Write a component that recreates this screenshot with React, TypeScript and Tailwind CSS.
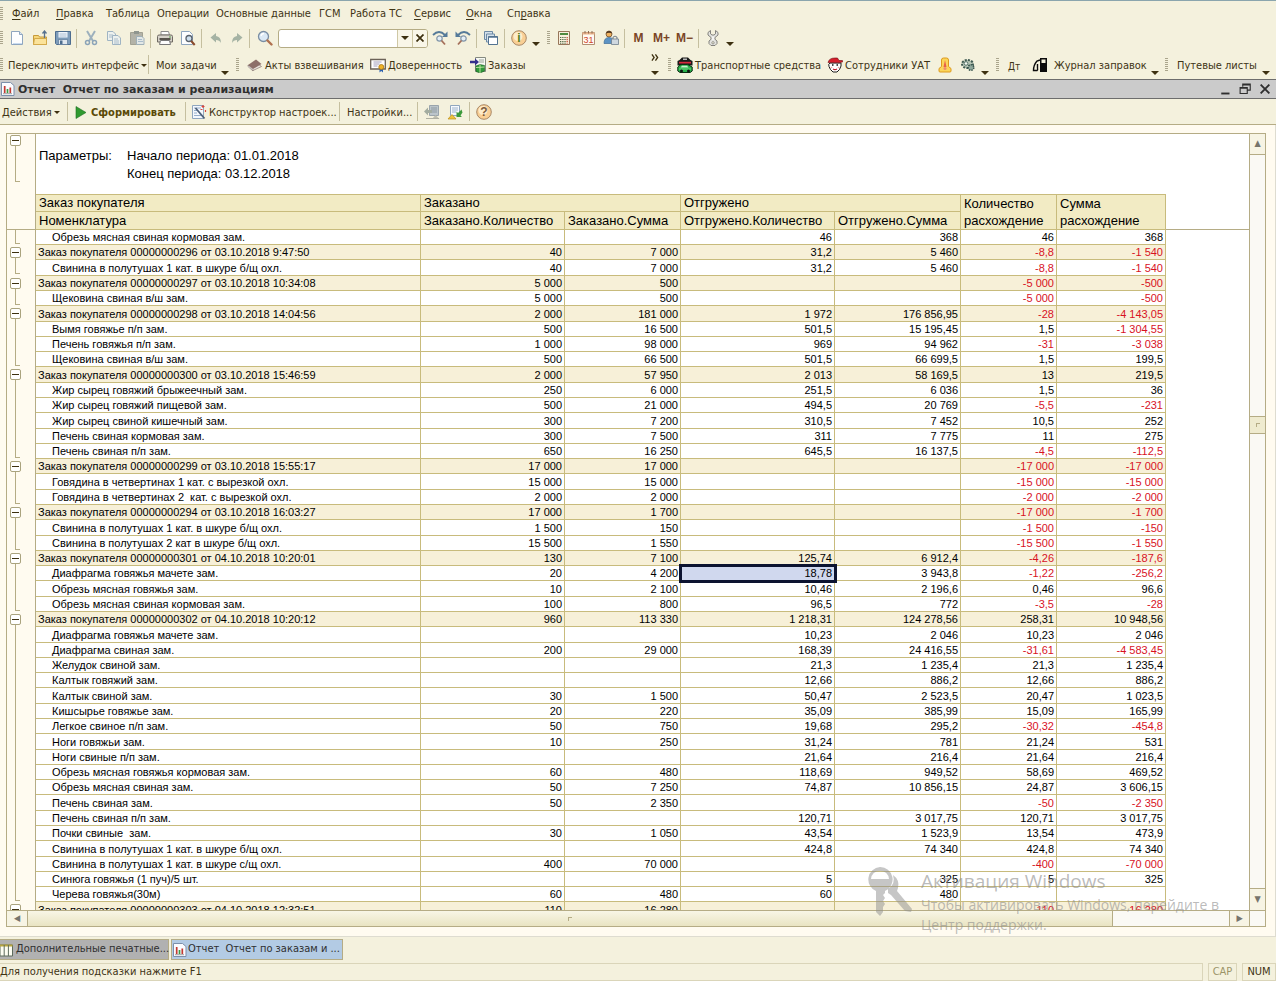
import type { ReactNode } from "react";
import clsx from "clsx";

type IconProps = { className?: string; children: ReactNode };

const Svg = ({ className = "h-4 w-4", children }: IconProps) => (
  <svg viewBox="0 0 16 16" className={clsx("shrink-0", className)} fill="none" aria-hidden="true">
    {children}
  </svg>
);

const NewIcon = () => (
  <Svg>
    <path d="M2.500 1.500h8l3 3v10h-11z" fill="#fdfeff" stroke="#8fa6bf" />
    <path d="M10.500 1.500v3h3" fill="#dbe6f2" stroke="#8fa6bf" />
    <path d="M4 13.500h9" stroke="#c9dcf0" />
  </Svg>
);

const OpenIcon = () => (
  <Svg>
    <path d="M1.500 5.500h5l1 1.500h7v7.500h-13z" fill="#f6d77a" stroke="#c79b3a" />
    <path d="M1.500 14.500l1-6h12v6z" fill="#fbe39a" stroke="#d4aa4a" />
    <path d="M12.500 8V2M10.500 3.500l2-2.500 2 2.500" stroke="#56718f" strokeWidth="1.300" />
  </Svg>
);

const SaveIcon = () => (
  <Svg>
    <path d="M.5 1.500h15v13H1.500l-1-1z" fill="#7d9cba" stroke="#4d6d8f" />
    <path d="M3.500 2h9v5.500h-9z" fill="#eef4fa" />
    <path d="M4.500 4h7M4.500 6h7" stroke="#9db4cc" strokeWidth=".8" />
    <path d="M3.500 9.500h9v5h-9z" fill="#dfe7ef" stroke="#4d6d8f" strokeWidth=".6" />
    <path d="M5 10.500h2.500v3.500H5z" fill="#4d6d8f" />
  </Svg>
);

const CutIcon = () => (
  <Svg>
    <path d="M4 1l6 10M12 1L6 11" stroke="#9db0bd" strokeWidth="2" />
    <circle cx="4.500" cy="12.500" r="2" stroke="#8ba4b8" strokeWidth="1.500" />
    <circle cx="11.500" cy="12.500" r="2" stroke="#8ba4b8" strokeWidth="1.500" />
  </Svg>
);

const CopyIcon = () => (
  <Svg>
    <path d="M1.500 1.500h5.500l2.500 2.500v6.500h-8z" fill="#edf1ee" stroke="#9fb4c3" />
    <path d="M3 5h4M3 7h4" stroke="#a9bccb" />
    <path d="M6.500 5.500H12l2.500 2.500v6.500h-8z" fill="#edf1ee" stroke="#9fb4c3" />
    <path d="M8 9h4M8 11h5M8 13h5" stroke="#a9bccb" />
  </Svg>
);

const PasteIcon = () => (
  <Svg>
    <path d="M1.500 2.500h12v12h-12z" fill="#b3b3a8" stroke="#a2a293" />
    <path d="M5 1h5v3H5z" fill="#8f968f" />
    <path d="M7.500 6.500H13l2 2v6H7.500z" fill="#e3e8e6" stroke="#9fb0b8" />
    <path d="M9 9.500h4M9 11.500h5" stroke="#a9bccb" />
  </Svg>
);

const PrintIcon = () => (
  <Svg>
    <path d="M4 5V1.500h7.500L12.500 5z" fill="#fff" stroke="#8c8c8c" />
    <path d="M.5 6.500q0-1.500 1.500-1.500h12q1.500 0 1.500 1.500V12H.5z" fill="#d6d2ca" stroke="#6f6a62" />
    <path d="M2.500 9h11" stroke="#4a463f" strokeWidth="1.800" />
    <path d="M3.500 10.500h9l1 4h-11z" fill="#fdfdfd" stroke="#777" />
    <path d="M12 7h2" stroke="#57a243" />
  </Svg>
);

const PreviewIcon = () => (
  <Svg>
    <path d="M1.500 1.500h8l3 3v10h-11z" fill="#fdfeff" stroke="#8fa6bf" />
    <circle cx="9" cy="8.500" r="3" fill="#cfe0ee" stroke="#59626c" strokeWidth="1.300" />
    <path d="M11.200 11l3.500 4" stroke="#8a4b2c" strokeWidth="2" />
  </Svg>
);

const UndoIcon = ({ flip = false }: { flip?: boolean }) => (
  <Svg className={clsx("h-4 w-4", flip && "-scale-x-100")}>
    <path d="M2.500 7.500L8 3v3q5 .5 5 7-1.500-3-5-3v2.500z" fill="#a5b3a4" />
  </Svg>
);

const LensIcon = () => (
  <Svg>
    <circle cx="6.500" cy="6.500" r="5" fill="#dbe9f5" stroke="#7a8ea3" strokeWidth="1.300" />
    <path d="M4 6q.5-2.500 3-2.500" stroke="#fff" strokeWidth="1.300" />
    <path d="M10.500 10.500l4 4" stroke="#b0714f" strokeWidth="2.400" strokeLinecap="round" />
  </Svg>
);

const FindIcon = ({ flip = false }: { flip?: boolean }) => (
  <Svg className={clsx("h-4 w-4", flip && "-scale-x-100")}>
    <path d="M1 5q6-6 12 0" stroke="#557a99" strokeWidth="1.800" />
    <path d="M15.500 1.500V7H10z" fill="#557a99" />
    <circle cx="7.500" cy="8.500" r="2.700" fill="#e4eef6" stroke="#8195a8" strokeWidth="1.200" />
    <path d="M9.500 10.500l3.500 4" stroke="#a5705a" strokeWidth="1.800" />
  </Svg>
);

const WindowsIcon = () => (
  <Svg>
    <path d="M1.500 1.500h8v8h-8z" fill="#d6e2ec" stroke="#6d8aa5" />
    <path d="M3.500 4h8v8h-8z" fill="#d6e2ec" stroke="#6d8aa5" />
    <path d="M5.500 6.500h9v8h-9z" fill="#fff" stroke="#537391" />
    <path d="M5.500 7h9" stroke="#537391" strokeWidth="1.500" />
  </Svg>
);

const RoundIcon = ({ glyph, color }: { glyph: string; color: string }) => (
  <Svg>
    <circle cx="8" cy="8" r="7.300" fill="#f9cf94" stroke="#a98866" />
    <circle cx="7" cy="6.500" r="4.500" fill="#fdeccb" />
    <text x="8" y="12.300" textAnchor="middle" fontSize="12" fontWeight="bold" fontFamily="Liberation Sans" fill={color}>
      {glyph}
    </text>
  </Svg>
);

const CalcIcon = () => (
  <Svg>
    <path d="M2.500 1.500h11v13h-11z" fill="#f8efdc" stroke="#97765a" />
    <path d="M4 3h8v2H4z" fill="#4f8a3f" />
    <path d="M4 7.500h6M4 9.500h6M4 11.500h6M4 13.200h6" stroke="#4f6b45" strokeDasharray="1.300 .9" />
    <path d="M11.200 7v6.500" stroke="#c9503c" strokeWidth="1.300" strokeDasharray="1.300 .7" />
  </Svg>
);

const CalendarIcon = () => (
  <Svg>
    <path d="M2.500 2.500h12v12h-12z" fill="#fffaf2" stroke="#b28e71" />
    <path d="M2.500 2.500h12v2h-12z" fill="#eab58d" />
    <path d="M5 1v2.500M8.500 1v2.500M12 1v2.500" stroke="#8f6a50" />
    <text x="8.500" y="13.200" textAnchor="middle" fontSize="9" fontFamily="Liberation Sans" fill="#d0442a">
      31
    </text>
  </Svg>
);

const UserLockIcon = () => (
  <Svg>
    <circle cx="6" cy="4" r="3" fill="#f0b260" stroke="#6c4b2b" strokeWidth=".8" />
    <path d="M3 3.500Q4 .5 6.500 1q2.500.5 2.500 2.500-3-1.500-6 0z" fill="#4c3420" />
    <path d="M1 13.500q0-6 5-6t5 6z" fill="#5c93c4" stroke="#3f6d98" strokeWidth=".7" />
    <path d="M10 9V7.500q2-2.500 4 0V9" stroke="#7d8893" strokeWidth="1.200" />
    <path d="M8.500 9h7v5.500h-7z" fill="#cfd8df" stroke="#71808e" strokeWidth=".8" />
  </Svg>
);

const WrenchIcon = () => (
  <Svg>
    <path
      d="M5.500.5L3 2.500V5l3 2.500v1.800L4 11v2.500L6 15.500h4l2-2V11L10 9.300V7.500L13 5V2.500L10.500.5v3.300L9 5H7L5.500 3.800z"
      fill="#e3e3df"
      stroke="#777773"
      strokeWidth=".9"
    />
    <circle cx="8" cy="12.800" r="1.200" fill="#f4f1dd" stroke="#777773" strokeWidth=".7" />
    <path d="M8 6.500v3.500" stroke="#fff" strokeWidth="1.200" />
  </Svg>
);

const BookIcon = () => (
  <Svg>
    <path d="M1 9l5 4.500 8.500-4L9 5.500z" fill="#e9e2dd" stroke="#8b7a74" strokeWidth=".7" />
    <path d="M1 8l8-5.500 5.500 4.500L6 12z" fill="#8d6f6a" />
    <path d="M1 9.500V8l5 4.500v1.500z" fill="#fff" stroke="#6a5550" strokeWidth=".5" />
  </Svg>
);

const CertIcon = () => (
  <Svg>
    <path d="M.7 2.500h14.600v9.500H.7z" fill="#fff" stroke="#6b6257" strokeWidth="1.300" />
    <path d="M3.500 5h8M3.500 7h6M3.500 9h4" stroke="#9793b5" strokeWidth=".9" />
    <path d="M9.500 11v4.500l1.700-1.500 1.800 1.500V11z" fill="#2d62b0" />
    <circle cx="11.300" cy="10" r="2.500" fill="#f0b429" stroke="#a8740e" strokeWidth=".8" />
  </Svg>
);

const OrdersIcon = () => (
  <Svg>
    <path d="M5.500.5h10v14h-10z" fill="#f7f9f3" stroke="#858a80" />
    <path d="M9 3h5M9 5h5" stroke="#9aa39a" />
    <path d="M0 3.700h5V1.500L9 5 5 8.500V6.300H0z" fill="#34308c" />
    <path d="M6 9l4-1.500 4.500 1V14L10 16l-4-1.500z" fill="#2f9a3a" stroke="#16591e" strokeWidth=".6" />
    <path d="M6 10.500l8.500-.5M10 7.500V16" stroke="#c5e8a6" strokeWidth=".9" />
  </Svg>
);

const CarsIcon = () => (
  <Svg>
    <path d="M5 .5h6L13.500 3 15.500 4v4.500H.5V4L2.500 3z" fill="#191919" />
    <path d="M2 4.800h12v1.700H2z" fill="#d8263c" />
    <path d="M6 1.500h4V3H6z" fill="#b9b9b9" />
    <path d="M.8 10q2-2.500 4.200-2.500h5.500l4.700 2.500v4l-2 1.500H3L.8 14z" fill="#28b04a" stroke="#0b2f12" />
    <path d="M5 8.700h5l1.500 1.800H3.500z" fill="#c6f0cd" />
    <path d="M2 12h12" stroke="#7be08f" strokeWidth=".8" />
    <circle cx="4.500" cy="14" r="1.500" fill="#111" />
    <circle cx="11.500" cy="14" r="1.500" fill="#111" />
  </Svg>
);

const DriverIcon = () => (
  <Svg>
    <path d="M3 6q-2 1-1 3.500l1.500 3L6 15h4l2.500-2.500L14 9V6z" fill="#fff" stroke="#1c1c1c" />
    <path d="M1 5.500Q2 1 8 1h2.500L12 3.500h3.500V5l-3.500.8z" fill="#d51f2c" stroke="#6d0b13" strokeWidth=".6" />
    <path d="M5 8h1.500M9.500 8H11" stroke="#111" strokeWidth="1.300" />
    <path d="M6 12q2 1.300 4 0" stroke="#c11f2c" strokeWidth="1.200" />
    <circle cx="4.500" cy="10.500" r=".8" fill="#f2a0a0" />
    <circle cx="11.500" cy="10.500" r=".8" fill="#f2a0a0" />
  </Svg>
);

const BellIcon = () => (
  <Svg>
    <path d="M4.500 3q0-2 2-2h3q2 0 2 2v6.500l2.500 2V14q0 1-1 1H3q-1 0-1-1v-2.500l2.500-2z" fill="#fbd55a" stroke="#dd9a1c" />
    <path d="M8 3l1.500 7h-3z" fill="#e8604a" />
    <circle cx="8" cy="11.500" r="1.500" fill="#f08b70" />
  </Svg>
);

const GearIcon = () => (
  <Svg>
    <ellipse cx="7.500" cy="7" rx="5.500" ry="4" fill="#b5c4b4" stroke="#3f5a52" strokeWidth="2" strokeDasharray="2 1.200" />
    <circle cx="6" cy="6.500" r="1.800" fill="#f4f8f2" stroke="#5a766c" />
    <circle cx="11" cy="10.500" r="2.800" fill="#8fa79b" stroke="#34504a" strokeWidth="1.500" strokeDasharray="1.500 1" />
  </Svg>
);

const PumpIcon = () => (
  <Svg>
    <path d="M8 1h7v14H8z" fill="#0b0b0b" />
    <path d="M9.500 2.500h4V6h-4z" fill="#f4f1dd" />
    <path d="M8 3L5 4Q1.500 8 1.500 13.500H5q1-.5.500-2.500V7" stroke="#0b0b0b" strokeWidth="1.400" />
  </Svg>
);

const ReportIcon = () => (
  <Svg>
    <path d="M1.500 1.500h9l3.500 3v10H1.500z" fill="#fbfcff" stroke="#7c90ab" />
    <path d="M4.700 5v7" stroke="#c23a32" strokeWidth="1.700" />
    <path d="M7.500 8v4" stroke="#3c9a45" strokeWidth="1.700" />
    <path d="M10.300 6.500V12" stroke="#c23a32" strokeWidth="1.700" />
    <path d="M3 12.700h9" stroke="#777" strokeWidth=".7" />
  </Svg>
);

const TableIcon = () => (
  <Svg>
    <path d="M0 3h12.500v11H0z" fill="#fdfdf2" stroke="#5d6b5d" />
    <path d="M0 3.500h12.500" stroke="#b7a53f" strokeWidth="2" />
    <path d="M4.200 3v11M8.400 3v11" stroke="#5d6b5d" />
  </Svg>
);

const WandIcon = () => (
  <Svg>
    <path d="M1.500 1.500h11v13h-11z" fill="#f4f8fd" stroke="#8fa6bf" />
    <path d="M3 4h7M3 6.500h3M3 9h3M3 11.500h8" stroke="#96aecb" />
    <path d="M4.500 4l9 10.500" stroke="#4b5e78" strokeWidth="1.800" />
    <path d="M12 1v3M10.500 2.500h3M9.500 5.500h2M14.500 6v2" stroke="#d9463b" strokeWidth="1.200" />
  </Svg>
);

const RestoreSettingsIcon = () => (
  <Svg>
    <path d="M5.500 1.500h9v10h-9z" fill="#bcc5ca" stroke="#9aa5ac" />
    <path d="M7 4h6M7 6h6M7 8h6" stroke="#8f9ba3" />
    <path d="M8 6H4V3.500L0 7.500l4 4V9h4z" fill="#a3aca0" />
    <path d="M8 15l3.500-4 4 4z" fill="#bdbdae" />
    <path d="M2 14.500h13" stroke="#b0b0a2" />
  </Svg>
);

const SaveSettingsIcon = () => (
  <Svg>
    <path d="M3.500 1.500h9v10h-9z" fill="#f7fafe" stroke="#8fa6bf" />
    <path d="M5 4h6M5 6h6M5 8h4" stroke="#9bb2cc" />
    <path d="M14.500 5.500L11 9 9.500 7.500V13H15l-1.500-1.500 2-3z" fill="#3c9a3c" />
    <path d="M1 15l4-4.500L9 15z" fill="#edc23c" stroke="#bd8f1b" strokeWidth=".7" />
  </Svg>
);

const Caret = () => <span className="h-0 w-0 border-x-4 border-t-4 border-x-transparent border-t-[#3d3010]" />;

const SmallCaret = () => (
  <span className="mt-0.5 h-0 w-0 shrink-0 border-x-3 border-t-3 border-x-transparent border-t-[#3d3010]" />
);

const More = ({ className }: { className: string }) => (
  <button aria-label="Ещё" className={clsx("flex h-full items-end justify-center pb-1", className)}>
    <Caret />
  </button>
);

const Handle = ({ className = "w-[5px]" }: { className?: string }) => (
  <span className={clsx("flex shrink-0 justify-end pr-0.5", className)}>
    <span className="h-3.5 w-[3px] bg-[repeating-linear-gradient(#aaa58c_0_1px,transparent_1px_2px)]" />
  </span>
);

const Sep = ({ className = "w-[5px]" }: { className?: string }) => (
  <span className={clsx("flex shrink-0 justify-center", className)}>
    <span className="h-[19px] w-px bg-[#c5bf9f]" />
  </span>
);

type ToolProps = { label: string; className?: string; children: ReactNode };

const Tool = ({ label, className = "w-[23px]", children }: ToolProps) => (
  <button aria-label={label} title={label} className={clsx("flex shrink-0 items-center justify-center", className)}>
    {children}
  </button>
);

type TextToolProps = { className: string; icon?: ReactNode; caret?: boolean; children: string };

const TextTool = ({ className, icon, caret, children }: TextToolProps) => (
  <button className={clsx("flex shrink-0 items-center gap-0.5 whitespace-nowrap", className)}>
    {icon}
    <span className="pt-[3px]">{children}</span>
    {caret && <SmallCaret />}
  </button>
);

const menu = [
  { pre: "", key: "Ф", post: "айл", width: "w-11" },
  { pre: "", key: "П", post: "равка", width: "w-[50px]" },
  { pre: "Таблица", key: "", post: "", width: "w-[51px]" },
  { pre: "Операции", key: "", post: "", width: "w-[59px]" },
  { pre: "Основные данные", key: "", post: "", width: "w-[103px]" },
  { pre: "ГСМ", key: "", post: "", width: "w-[31px]" },
  { pre: "Работа ТС", key: "", post: "", width: "w-16" },
  { pre: "", key: "С", post: "ервис", width: "w-[52px]" },
  { pre: "", key: "О", post: "кна", width: "w-[41px]" },
  { pre: "Сп", key: "р", post: "авка", width: "w-[51px]" },
];

type Row = { name: string; group?: boolean; v: string[] };

const rows: Row[] = [
  { name: "Обрезь мясная свиная кормовая зам.", v: ["", "", "46", "368", "46", "368"] },
  { name: "Заказ покупателя 00000000296 от 03.10.2018 9:47:50", group: true, v: ["40", "7 000", "31,2", "5 460", "-8,8", "-1 540"] },
  { name: "Свинина в полутушах 1 кат. в шкуре б/щ охл.", v: ["40", "7 000", "31,2", "5 460", "-8,8", "-1 540"] },
  { name: "Заказ покупателя 00000000297 от 03.10.2018 10:34:08", group: true, v: ["5 000", "500", "", "", "-5 000", "-500"] },
  { name: "Щековина свиная в/ш зам.", v: ["5 000", "500", "", "", "-5 000", "-500"] },
  { name: "Заказ покупателя 00000000298 от 03.10.2018 14:04:56", group: true, v: ["2 000", "181 000", "1 972", "176 856,95", "-28", "-4 143,05"] },
  { name: "Вымя говяжье п/п зам.", v: ["500", "16 500", "501,5", "15 195,45", "1,5", "-1 304,55"] },
  { name: "Печень говяжья п/п зам.", v: ["1 000", "98 000", "969", "94 962", "-31", "-3 038"] },
  { name: "Щековина свиная в/ш зам.", v: ["500", "66 500", "501,5", "66 699,5", "1,5", "199,5"] },
  { name: "Заказ покупателя 00000000300 от 03.10.2018 15:46:59", group: true, v: ["2 000", "57 950", "2 013", "58 169,5", "13", "219,5"] },
  { name: "Жир сырец говяжий брыжеечный зам.", v: ["250", "6 000", "251,5", "6 036", "1,5", "36"] },
  { name: "Жир сырец говяжий пищевой зам.", v: ["500", "21 000", "494,5", "20 769", "-5,5", "-231"] },
  { name: "Жир сырец свиной кишечный зам.", v: ["300", "7 200", "310,5", "7 452", "10,5", "252"] },
  { name: "Печень свиная кормовая зам.", v: ["300", "7 500", "311", "7 775", "11", "275"] },
  { name: "Печень свиная п/п зам.", v: ["650", "16 250", "645,5", "16 137,5", "-4,5", "-112,5"] },
  { name: "Заказ покупателя 00000000299 от 03.10.2018 15:55:17", group: true, v: ["17 000", "17 000", "", "", "-17 000", "-17 000"] },
  { name: "Говядина в четвертинах 1 кат. с вырезкой охл.", v: ["15 000", "15 000", "", "", "-15 000", "-15 000"] },
  { name: "Говядина в четвертинах 2  кат. с вырезкой охл.", v: ["2 000", "2 000", "", "", "-2 000", "-2 000"] },
  { name: "Заказ покупателя 00000000294 от 03.10.2018 16:03:27", group: true, v: ["17 000", "1 700", "", "", "-17 000", "-1 700"] },
  { name: "Свинина в полутушах 1 кат. в шкуре б/щ охл.", v: ["1 500", "150", "", "", "-1 500", "-150"] },
  { name: "Свинина в полутушах 2 кат в шкуре б/щ охл.", v: ["15 500", "1 550", "", "", "-15 500", "-1 550"] },
  { name: "Заказ покупателя 00000000301 от 04.10.2018 10:20:01", group: true, v: ["130", "7 100", "125,74", "6 912,4", "-4,26", "-187,6"] },
  { name: "Диафрагма говяжья мачете зам.", v: ["20", "4 200", "18,78", "3 943,8", "-1,22", "-256,2"] },
  { name: "Обрезь мясная говяжья зам.", v: ["10", "2 100", "10,46", "2 196,6", "0,46", "96,6"] },
  { name: "Обрезь мясная свиная кормовая зам.", v: ["100", "800", "96,5", "772", "-3,5", "-28"] },
  { name: "Заказ покупателя 00000000302 от 04.10.2018 10:20:12", group: true, v: ["960", "113 330", "1 218,31", "124 278,56", "258,31", "10 948,56"] },
  { name: "Диафрагма говяжья мачете зам.", v: ["", "", "10,23", "2 046", "10,23", "2 046"] },
  { name: "Диафрагма свиная зам.", v: ["200", "29 000", "168,39", "24 416,55", "-31,61", "-4 583,45"] },
  { name: "Желудок свиной зам.", v: ["", "", "21,3", "1 235,4", "21,3", "1 235,4"] },
  { name: "Калтык говяжий зам.", v: ["", "", "12,66", "886,2", "12,66", "886,2"] },
  { name: "Калтык свиной зам.", v: ["30", "1 500", "50,47", "2 523,5", "20,47", "1 023,5"] },
  { name: "Кишсырье говяжье зам.", v: ["20", "220", "35,09", "385,99", "15,09", "165,99"] },
  { name: "Легкое свиное п/п зам.", v: ["50", "750", "19,68", "295,2", "-30,32", "-454,8"] },
  { name: "Ноги говяжьи зам.", v: ["10", "250", "31,24", "781", "21,24", "531"] },
  { name: "Ноги свиные п/п зам.", v: ["", "", "21,64", "216,4", "21,64", "216,4"] },
  { name: "Обрезь мясная говяжья кормовая зам.", v: ["60", "480", "118,69", "949,52", "58,69", "469,52"] },
  { name: "Обрезь мясная свиная зам.", v: ["50", "7 250", "74,87", "10 856,15", "24,87", "3 606,15"] },
  { name: "Печень свиная зам.", v: ["50", "2 350", "", "", "-50", "-2 350"] },
  { name: "Печень свиная п/п зам.", v: ["", "", "120,71", "3 017,75", "120,71", "3 017,75"] },
  { name: "Почки свиные  зам.", v: ["30", "1 050", "43,54", "1 523,9", "13,54", "473,9"] },
  { name: "Свинина в полутушах 1 кат. в шкуре б/щ охл.", v: ["", "", "424,8", "74 340", "424,8", "74 340"] },
  { name: "Свинина в полутушах 1 кат. в шкуре с/щ охл.", v: ["400", "70 000", "", "", "-400", "-70 000"] },
  { name: "Синюга говяжья (1 пуч)/5 шт.", v: ["", "", "5", "325", "5", "325"] },
  { name: "Черева говяжья(30м)", v: ["60", "480", "60", "480", "", ""] },
  { name: "Заказ покупателя 00000000303 от 04.10.2018 12:32:51", group: true, v: ["110", "16 280", "", "", "-110", "-16 280"] },
];

const selected = { row: 22, col: 2 };

const GroupToggle = () => (
  <button
    aria-label="Свернуть группу"
    className="flex h-[11px] w-[11px] shrink-0 items-center justify-center rounded-[2px] border border-[#aaa37e] bg-white"
  >
    <span className="h-px w-[7px] bg-[#3d3010]" />
  </button>
);

const OutlineCell = ({ group, last, height }: { group?: boolean; last: boolean; height: string }) => (
  <td className="border-r border-[#b5ac85] bg-[#fffbf0] p-0 align-top">
    {group ? (
      <div className={clsx("flex flex-col items-center pt-0.5 pr-3", height)}>
        <GroupToggle />
        <span className="w-px flex-1 bg-[#b5ac85]" />
      </div>
    ) : (
      <div className={clsx("ml-2 w-[5px] border-l border-[#b5ac85]", last ? "h-[14px] border-b" : height)} />
    )}
  </td>
);

const ReportTable = () => {
  const head = "border-r border-b border-[#c8bb7c] bg-[#f2ebc4] px-[3px] py-0 text-left align-top font-normal";
  return (
    <table className="w-full table-fixed border-separate border-spacing-0">
      <colgroup>
        <col className="w-[29px]" />
        <col className="w-[385px]" />
        <col className="w-[144px]" />
        <col className="w-[116px]" />
        <col className="w-[154px]" />
        <col className="w-[126px]" />
        <col className="w-24" />
        <col className="w-[109px]" />
        <col />
      </colgroup>
      <thead className="text-[13px] leading-[17px]">
        <tr className="h-[18px]">
          <td rowSpan={2} className="border-r border-b border-[#b5ac85] bg-[#fffbf0] p-0" />
          <th className={clsx(head, "border-t leading-4")}>Заказ покупателя</th>
          <th colSpan={2} className={clsx(head, "border-t leading-4")}>Заказано</th>
          <th colSpan={2} className={clsx(head, "border-t leading-4")}>Отгружено</th>
          <th rowSpan={2} className={clsx(head, "border-t")}>Количество расхождение</th>
          <th rowSpan={2} className={clsx(head, "border-t")}>Сумма расхождение</th>
          <td rowSpan={2} className="border-b border-[#b5ac85] p-0" />
        </tr>
        <tr className="h-[18px]">
          <th className={head}>Номенклатура</th>
          <th className={head}>Заказано.Количество</th>
          <th className={head}>Заказано.Сумма</th>
          <th className={head}>Отгружено.Количество</th>
          <th className={head}>Отгружено.Сумма</th>
        </tr>
      </thead>
      <tbody className="text-[11px] leading-[14px] whitespace-pre">
        {rows.map((row, i) => {
          const height = i % 7 === 2 || i % 7 === 5 ? "h-4" : "h-[15px]";
          return (
            <tr key={i} className={height}>
              <OutlineCell group={row.group} last={!!rows[i + 1]?.group} height={height} />
              <td
                className={clsx(
                  "overflow-hidden border-r border-b border-[#c8bb7c] py-0",
                  row.group ? "bg-[#f7f0d8] pl-0.5" : "pl-4",
                )}
              >
                {row.name}
              </td>
              {row.v.map((value, c) => (
                <td
                  key={c}
                  className={clsx(
                    "border-r border-b border-[#c8bb7c] py-0 pr-0.5 text-right",
                    value.startsWith("-") && "text-[#d8121f]",
                    selected.row === i && selected.col === c
                      ? "relative bg-[#d0d8ee] outline-3 -outline-offset-1 outline-[#0c1330]"
                      : row.group && "bg-[#f7f0d8]",
                  )}
                >
                  {value}
                </td>
              ))}
              <td className="p-0" />
            </tr>
          );
        })}
      </tbody>
    </table>
  );
};

const ScrollButton = ({ label, glyph, className }: { label: string; glyph: string; className: string }) => (
  <button
    aria-label={label}
    className={clsx("flex shrink-0 items-center justify-center border-[#b5ac85] bg-[#f7f4e4] text-[9px] text-[#77756c]", className)}
  >
    {glyph}
  </button>
);

const Watermark = () => (
  <div className="pointer-events-none absolute right-[49px] bottom-[49px] flex gap-2 font-['Open_Sans','Noto_Sans',sans-serif] text-[#8d8d8d]/60">
    <svg viewBox="0 0 46 50" className="h-[50px] w-[46px]" fill="#8d8d8d" fillOpacity=".5" aria-hidden="true">
      <path
        fillRule="evenodd"
        d="M13 0a12.500 12.500 0 0 1 5 24v2l-2 2 2 3-2 3 2 3-2 3v5l-3 4-4-4V24A12.500 12.500 0 0 1 13 0zM4 12h18q-1-8-9-8t-9 8z"
      />
      <path d="M26 8q7 5 5 13l-1 3 15 18-1 3-6-1-14-16-3-2v-4q8-5 5-14z" />
    </svg>
    <div>
      <p className="text-[19px] leading-7">Активация Windows</p>
      <p className="w-[310px] text-[14px] leading-5">Чтобы активировать Windows, перейдите в Центр поддержки.</p>
    </div>
  </div>
);

const App = () => {
  return (
    <div className="relative flex h-screen flex-col overflow-hidden bg-white pr-1 pb-[3px] font-['DejaVu_Sans_Condensed','Noto_Sans',sans-serif] text-[11px] text-[#3f3415]">
      <header className="border-t border-[#8aa5ad] bg-[#f4f1dd]">
        <nav className="flex h-[25px] items-center">
          <Handle />
          <div className="flex pt-0.5 pl-[7px]">
            {menu.map((item) => (
              <button key={item.pre + item.key + item.post} className={clsx("shrink-0 text-left whitespace-nowrap", item.width)}>
                {item.pre}
                {item.key && <span className="underline underline-offset-2">{item.key}</span>}
                {item.post}
              </button>
            ))}
          </div>
        </nav>

        <div className="flex h-6 items-center">
          <Handle />
          <Tool label="Новый"><NewIcon /></Tool>
          <Tool label="Открыть"><OpenIcon /></Tool>
          <Tool label="Сохранить"><SaveIcon /></Tool>
          <Sep />
          <Tool label="Вырезать"><CutIcon /></Tool>
          <Tool label="Копировать"><CopyIcon /></Tool>
          <Tool label="Вставить"><PasteIcon /></Tool>
          <Sep />
          <Tool label="Печать"><PrintIcon /></Tool>
          <Tool label="Просмотр"><PreviewIcon /></Tool>
          <Sep />
          <Tool label="Отменить"><UndoIcon /></Tool>
          <Tool label="Вернуть" className="w-5"><UndoIcon flip /></Tool>
          <Sep />
          <Tool label="Найти" className="w-[26px]"><LensIcon /></Tool>
          <div className="flex h-[19px] w-[150px] shrink-0 overflow-hidden rounded-[3px] border border-[#b5ac85] bg-white">
            <input aria-label="Поиск" className="min-w-0 flex-1 px-1 outline-none" />
            <button aria-label="История поиска" className="flex w-[15px] items-center justify-center border-l border-[#cfc8a5] bg-[#f9f6e8]">
              <Caret />
            </button>
            <button aria-label="Очистить" className="flex w-[15px] items-center justify-center border-l border-[#cfc8a5] bg-[#f9f6e8]">
              <Svg className="h-2 w-2">
                <path d="M1 1l14 14M15 1L1 15" stroke="#3d3010" strokeWidth="3.500" />
              </Svg>
            </button>
          </div>
          <Tool label="Найти следующий"><FindIcon /></Tool>
          <Tool label="Найти предыдущий"><FindIcon flip /></Tool>
          <Sep />
          <Tool label="Окна"><WindowsIcon /></Tool>
          <Sep />
          <Tool label="Информация"><RoundIcon glyph="i" color="#4f7f1e" /></Tool>
          <More className="w-3" />
          <Handle className="w-2.5" />
          <Tool label="Калькулятор" className="w-6"><CalcIcon /></Tool>
          <Tool label="Календарь"><CalendarIcon /></Tool>
          <Tool label="Пользователи"><UserLockIcon /></Tool>
          <Sep />
          <div className="flex font-['Liberation_Sans',Arial,sans-serif] text-[12px] font-bold text-[#7a4526]">
            <Tool label="Память">M</Tool>
            <Tool label="Прибавить к памяти">M+</Tool>
            <Tool label="Вычесть из памяти">M−</Tool>
          </div>
          <Sep />
          <Tool label="Параметры"><WrenchIcon /></Tool>
          <More className="w-3" />
        </div>

        <div className="flex h-[29px] items-center">
          <Handle />
          <TextTool className="w-[141px] pl-[3px]" caret>Переключить интерфейс</TextTool>
          <Sep />
          <TextTool className="w-[67px] pl-[5px]">Мои задачи</TextTool>
          <More className="w-3.5" />
          <Handle className="w-[9px]" />
          <TextTool className="w-[129px] pl-[6px]" icon={<BookIcon />}>Акты взвешивания</TextTool>
          <TextTool className="w-[100px]" icon={<CertIcon />}>Доверенность</TextTool>
          <TextTool className="w-[60px]" icon={<OrdersIcon />}>Заказы</TextTool>
          <button aria-label="Другие кнопки" className="ml-[119px] flex w-3 flex-col items-center justify-between self-stretch pt-1 pb-1 leading-none">
            <Svg className="h-[7px] w-2">
              <path d="M1 1l5 7-5 7M9 1l5 7-5 7" stroke="#3d3010" strokeWidth="3" />
            </Svg>
            <Caret />
          </button>
          <Handle className="w-3" />
          <TextTool className="w-[154px] pl-1" icon={<CarsIcon />}>Транспортные средства</TextTool>
          <TextTool className="w-[106px]" icon={<DriverIcon />}>Сотрудники УАТ</TextTool>
          <Tool label="Напоминания"><BellIcon /></Tool>
          <Tool label="Обслуживание"><GearIcon /></Tool>
          <More className="w-3" />
          <Handle className="w-2.5" />
          <TextTool className="w-[27px] pl-[7px] text-[10px]">Дт</TextTool>
          <Tool label="Заправка"><PumpIcon /></Tool>
          <TextTool className="w-[98px] pl-[3px]">Журнал заправок</TextTool>
          <More className="w-3" />
          <Handle className="w-[9px]" />
          <TextTool className="w-[90px] pl-[7px]">Путевые листы</TextTool>
          <More className="w-3" />
        </div>
      </header>

      <div className="flex h-5 shrink-0 items-center border-t border-b border-[#6d6d6d] bg-[#cbcbcb] pr-px text-[#2f2f2f]">
        <ReportIcon />
        <h1 className="flex-1 pt-0.5 pl-0.5 font-['DejaVu_Sans','Noto_Sans',sans-serif] font-bold whitespace-pre">
          Отчет  Отчет по заказам и реализациям
        </h1>
        <Tool label="Свернуть" className="w-5">
          <Svg className="h-3 w-3"><path d="M3 14h11" stroke="#2f2f2f" strokeWidth="2.500" /></Svg>
        </Tool>
        <Tool label="Восстановить" className="w-5">
          <Svg className="h-3 w-3"><path d="M5 5V1.500h10v8h-4M1.500 6h9.500v8H1.500zM1.500 7h9.500M5 2.500h10" stroke="#2f2f2f" strokeWidth="1.500" /></Svg>
        </Tool>
        <Tool label="Закрыть" className="w-5">
          <Svg className="h-2.5 w-2.5"><path d="M1 1l14 14M15 1L1 15" stroke="#2f2f2f" strokeWidth="3" /></Svg>
        </Tool>
      </div>

      <div className="flex h-[26px] shrink-0 items-center border-b border-[#b5ac85] bg-[#f4f1dd]">
        <TextTool className="w-[65px] pl-0.5" caret>Действия</TextTool>
        <Sep />
        <TextTool
          className="w-[113px] pl-[3px] font-bold text-[#5a4a08]"
          icon={<Svg><path d="M3 2.500v12L13 8.500z" fill="#2f9a2f" stroke="#1f6f23" strokeWidth=".6" /></Svg>}
        >
          Сформировать
        </TextTool>
        <Sep />
        <TextTool className="w-[149px] pl-[3px]" icon={<WandIcon />}>Конструктор настроек...</TextTool>
        <Sep />
        <TextTool className="w-[73px] pl-[5px]">Настройки...</TextTool>
        <Sep />
        <Tool label="Восстановить настройки"><RestoreSettingsIcon /></Tool>
        <Tool label="Сохранить настройки" className="w-6"><SaveSettingsIcon /></Tool>
        <Sep />
        <Tool label="Справка" className="w-6"><RoundIcon glyph="?" color="#7a5a3c" /></Tool>
      </div>

      <main className="flex min-h-0 flex-1 flex-col border-r border-b border-[#dedcd0] bg-[#fffbf0] pt-2 pr-[9px] pb-[9px] pl-1.5">
        <div className="flex min-h-0 flex-1 flex-col border border-[#b5ac85] bg-white">
          <div className="flex min-h-0 flex-1">
            <div className="min-w-0 flex-1 overflow-hidden font-['Liberation_Sans',Arial,sans-serif] text-black">
              <div className="flex h-[60px]">
                <div className="flex w-[29px] flex-col items-center border-r border-[#b5ac85] bg-[#fffbf0] pt-px pr-3 pb-3">
                  <GroupToggle />
                  <span className="ml-1 w-[5px] flex-1 border-b border-l border-[#b5ac85]" />
                </div>
                <dl className="grid grid-cols-[88px_auto] content-start pt-[13px] pl-[3px] text-[13px] leading-[18px]">
                  <dt>Параметры:</dt>
                  <dd>Начало периода: 01.01.2018</dd>
                  <dd className="col-start-2">Конец периода: 03.12.2018</dd>
                </dl>
              </div>
              <ReportTable />
            </div>
            <div className="flex w-4 shrink-0 flex-col border-l border-[#b5ac85] bg-[#faf9f4]">
              <ScrollButton label="Вверх" glyph="▲" className="h-[21px] border-b" />
              <div className="flex min-h-0 flex-1 flex-col">
                <div className="flex-[261]" />
                <div className="flex h-[18px] items-center justify-center border-y border-[#b5ac85] bg-[#efebcf]">
                  <span className="h-1 w-1 border-t border-l border-[#b5ac85]" />
                </div>
                <div className="flex-[454]" />
              </div>
              <ScrollButton label="Вниз" glyph="▼" className="h-[22px] border-t" />
            </div>
          </div>
          <div className="flex h-4 shrink-0 border-t border-[#b5ac85] bg-[#faf9f4]">
            <ScrollButton label="Влево" glyph="◀" className="w-[21px] border-r" />
            <div className="flex min-w-0 flex-1">
              <div className="flex flex-[1085] items-center justify-center border-r border-[#b5ac85] bg-linear-to-b from-[#f8f6e6] to-[#e9e4c2]">
                <span className="h-1 w-1 border-t border-l border-[#b5ac85]" />
              </div>
              <div className="flex-[116]" />
            </div>
            <ScrollButton label="Вправо" glyph="▶" className="w-[21px] border-x" />
            <div className="w-[15px]" />
          </div>
        </div>
      </main>

      <footer className="shrink-0 bg-[#f4f1dd] pt-0.5">
        <div className="flex h-[21px] gap-0.5 text-[#2f2f2f]">
          <button className="flex w-[169px] items-center border border-l-0 border-[#b5ac85] bg-[#b1b1b1] whitespace-nowrap">
            <TableIcon />
            Дополнительные печатные...
          </button>
          <button className="flex w-[172px] items-center border border-[#b5ac85] bg-[#b3cbe4] whitespace-pre">
            <ReportIcon />
            Отчет  Отчет по заказам и ...
          </button>
        </div>
        <div className="mt-[3px] flex h-[18px] gap-[5px] text-[#3f3415]">
          <p className="flex flex-1 items-center border border-l-0 border-[#dad5b9]">Для получения подсказки нажмите F1</p>
          <p className="flex w-[29px] items-center justify-center border border-[#dad5b9] text-[#9c9468]">CAP</p>
          <p className="flex w-[34px] items-center justify-center border border-[#dad5b9]">NUM</p>
        </div>
      </footer>

      <Watermark />
    </div>
  );
};

export default App;
